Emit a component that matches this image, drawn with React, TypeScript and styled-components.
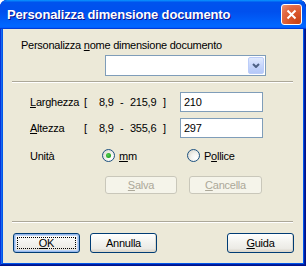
import styled, { createGlobalStyle } from "styled-components";

const GlobalStyle = createGlobalStyle`
  html, body {
    margin: 0;
    padding: 0;
    background: #ffffff;
  }
  body {
    font-family: "Liberation Sans", Arial, sans-serif;
    font-size: 11px;
    letter-spacing: -0.25px;
    color: #000000;
  }
`;

const Window = styled.div`
  width: 306px;
  height: 266px;
  display: flex;
  flex-direction: column;
  box-sizing: border-box;
  background: #0055ea;
  border-radius: 7px 7px 0 0;
  overflow: hidden;
  box-shadow: inset -1px -1px #00138c, inset 1px 1px #0831d9,
    inset -2px -2px #001ea0, inset 2px 2px #166aee;
`;

const TitleBar = styled.div`
  flex: none;
  height: 29px;
  display: flex;
  align-items: center;
  padding: 0 4px 0 7px;
  box-sizing: border-box;
  background: linear-gradient(
    180deg,
    #0997ff,
    #0053ee 8%,
    #0050ee 40%,
    #0066ff 88%,
    #0066ff 93%,
    #005bff 95%,
    #003dd7 96%,
    #003dd7
  );
  border-radius: 7px 7px 0 0;
`;

const Title = styled.div`
  flex: 1;
  color: #ffffff;
  font-family: "Liberation Sans", Arial, sans-serif;
  font-weight: bold;
  font-size: 13px;
  letter-spacing: -0.15px;
  text-shadow: 1px 1px #0f1089;
  white-space: nowrap;
`;

const CloseButton = styled.div`
  width: 21px;
  height: 21px;
  box-sizing: border-box;
  border: 1px solid #ffffff;
  border-radius: 3px;
  background: radial-gradient(
    circle at 85% 90%,
    #c94315 0%,
    #d9552a 40%,
    #e26a45 70%,
    #ec9477 100%
  );
  display: flex;
  align-items: center;
  justify-content: center;
`;

const Body = styled.div`
  flex: 1;
  margin: 0 3px 3px 3px;
  background: #ece9d8;
  display: flex;
  flex-direction: column;
  padding-top: 10px;
`;

const GroupLabel = styled.div`
  margin-left: 18px;
  height: 13px;
  line-height: 13px;
  white-space: nowrap;
`;

const Combo = styled.div`
  margin: 3px 0 0 102px;
  width: 161px;
  height: 21px;
  box-sizing: border-box;
  border: 1px solid #7f9db9;
  background: #ffffff;
  display: flex;
  justify-content: flex-end;
  padding: 1px;
`;

const ComboArrow = styled.div`
  width: 16px;
  height: 17px;
  box-sizing: border-box;
  border: 1px solid #bccdf9;
  border-radius: 2px;
  background: linear-gradient(180deg, #e0eafe 0%, #c7d6fb 50%, #b4c8f8 100%);
  display: flex;
  align-items: center;
  justify-content: center;
`;

const Separator = styled.div<{ $top: number }>`
  margin: ${(p) => p.$top}px 0 0 9px;
  width: 281px;
  height: 0;
  border-top: 1px solid #aca899;
  border-bottom: 1px solid #ffffff;
`;

const FieldRow = styled.div<{ $top: number }>`
  margin: ${(p) => p.$top}px 0 0 27px;
  display: grid;
  grid-template-columns: 54px 96px 83px;
  align-items: center;
  height: 20px;
`;

const Range = styled.div`
  display: grid;
  grid-template-columns: 15px 21px 10px 33px auto;
  white-space: nowrap;
`;

const TextBox = styled.div`
  height: 20px;
  box-sizing: border-box;
  border: 1px solid #7f9db9;
  background: #ffffff;
  padding: 0 3px;
  line-height: 18px;
`;

const RadioRow = styled.div`
  margin: 11px 0 0 27px;
  display: grid;
  grid-template-columns: 72px 85px auto;
  align-items: center;
  height: 13px;
`;

const RadioOption = styled.div`
  display: flex;
  align-items: center;
  gap: 4px;
`;

const RadioCircle = styled.div<{ $checked?: boolean }>`
  width: 13px;
  height: 13px;
  box-sizing: border-box;
  border-radius: 50%;
  border: 1px solid #1c5180;
  background: radial-gradient(circle at 70% 70%, #ffffff 0%, #f4f3ee 40%, #d2d0c6 100%);
  display: flex;
  align-items: center;
  justify-content: center;
  &::after {
    content: "";
    display: ${(p) => (p.$checked ? "block" : "none")};
    width: 5px;
    height: 5px;
    border-radius: 50%;
    background: radial-gradient(circle at 40% 40%, #55d051 0%, #21a121 70%, #1a8b1a 100%);
  }
`;

const ButtonRow = styled.div<{ $top: number }>`
  margin-top: ${(p) => p.$top}px;
  display: flex;
  align-items: center;
`;

const ActionRow = styled(ButtonRow)`
  margin-left: 102px;
  gap: 12px;
`;

const Footer = styled(ButtonRow)`
  padding: 0 9px 0 10px;
  gap: 10px;
`;

const Button = styled.div<{ $w: number; $h: number; $primary?: boolean; $disabled?: boolean; $push?: boolean }>`
  width: ${(p) => p.$w}px;
  height: ${(p) => p.$h}px;
  box-sizing: border-box;
  margin-left: ${(p) => (p.$push ? "auto" : "0")};
  border-radius: 3px;
  border: 1px solid ${(p) => (p.$disabled ? "#c9c7ba" : "#003c74")};
  background: ${(p) =>
    p.$disabled
      ? "#f5f4ea"
      : "linear-gradient(180deg, #ffffff 0%, #f3f3ef 45%, #ecebe6 80%, #d6d0c5 100%)"};
  color: ${(p) => (p.$disabled ? "#aca899" : "#000000")};
  box-shadow: ${(p) =>
    p.$primary
      ? "inset 0 0 0 1px #97b8ec, inset 0 0 0 2px #bcd4f6"
      : p.$disabled
      ? "none"
      : "inset -1px -1px 0 #dcd8cc"};
  display: flex;
  align-items: center;
  justify-content: center;
  position: relative;
  white-space: nowrap;
`;

const FocusRing = styled.div`
  position: absolute;
  inset: 3px;
  border: 1px dotted #000000;
`;

const Key = styled.span`
  text-decoration: underline;
  text-underline-offset: 1px;
`;

export default function App() {
  return (
    <>
      <GlobalStyle />
      <Window>
        <TitleBar>
          <Title>Personalizza dimensione documento</Title>
          <CloseButton>
            <svg width="11" height="11" viewBox="0 0 11 11">
              <path d="M1.5 1.5 L9.5 9.5 M9.5 1.5 L1.5 9.5" stroke="#ffffff" strokeWidth="2" fill="none" />
            </svg>
          </CloseButton>
        </TitleBar>
        <Body>
          <GroupLabel>
            Personalizza <Key>n</Key>ome dimensione documento
          </GroupLabel>
          <Combo>
            <ComboArrow>
              <svg width="8" height="5" viewBox="0 0 8 5">
                <path d="M1 1 L4 4 L7 1" stroke="#4d6185" strokeWidth="2" fill="none" />
              </svg>
            </ComboArrow>
          </Combo>
          <Separator $top={5} />
          <FieldRow $top={9}>
            <span>
              <Key>L</Key>arghezza
            </span>
            <Range>
              <span>[</span>
              <span>8,9</span>
              <span>-</span>
              <span>215,9</span>
              <span>]</span>
            </Range>
            <TextBox>210</TextBox>
          </FieldRow>
          <FieldRow $top={6}>
            <span>
              <Key>A</Key>ltezza
            </span>
            <Range>
              <span>[</span>
              <span>8,9</span>
              <span>-</span>
              <span>355,6</span>
              <span>]</span>
            </Range>
            <TextBox>297</TextBox>
          </FieldRow>
          <RadioRow>
            <span>Unità</span>
            <RadioOption>
              <RadioCircle $checked />
              <span>
                <Key>m</Key>m
              </span>
            </RadioOption>
            <RadioOption>
              <RadioCircle />
              <span>
                P<Key>o</Key>llice
              </span>
            </RadioOption>
          </RadioRow>
          <ActionRow $top={14}>
            <Button $w={72} $h={18} $disabled>
              <span>
                <Key>S</Key>alva
              </span>
            </Button>
            <Button $w={73} $h={18} $disabled>
              <span>
                <Key>C</Key>ancella
              </span>
            </Button>
          </ActionRow>
          <Separator $top={27} />
          <Footer $top={10}>
            <Button $w={67} $h={20} $primary>
              <FocusRing />
              <span>
                <Key>O</Key>K
              </span>
            </Button>
            <Button $w={67} $h={20}>
              Annulla
            </Button>
            <Button $w={67} $h={20} $push>
              <span>
                <Key>G</Key>uida
              </span>
            </Button>
          </Footer>
        </Body>
      </Window>
    </>
  );
}
